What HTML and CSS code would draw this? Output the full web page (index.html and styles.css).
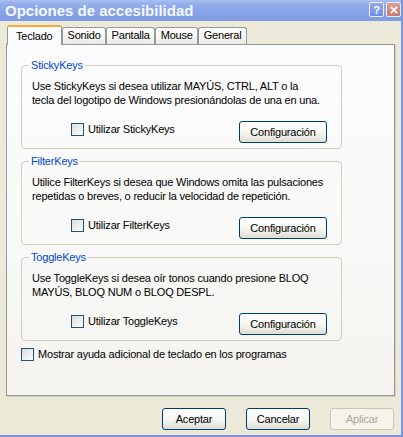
FILE: index.html
```html
<!DOCTYPE html>
<html lang="es">
<head>
<meta charset="utf-8">
<title>Opciones de accesibilidad</title>
<link rel="stylesheet" href="styles.css">
</head>
<body>
<div class="window">
  <div class="titlebar">
    <span class="title">Opciones de accesibilidad</span>
    <div class="tb-buttons">
      <span class="tb-btn help">?</span>
      <span class="tb-btn close"><svg width="14" height="14" viewBox="0 0 14 14"><path d="M4 4 L10 10 M10 4 L4 10" stroke="#fff" stroke-width="2" stroke-linecap="square"/></svg></span>
    </div>
  </div>
  <div class="content">
    <div class="tabs">
      <div class="tab active">Teclado</div>
      <div class="tab">Sonido</div>
      <div class="tab">Pantalla</div>
      <div class="tab">Mouse</div>
      <div class="tab">General</div>
    </div>
    <div class="panel">
      <fieldset class="group">
        <legend>StickyKeys</legend>
        <p class="desc">Use StickyKeys si desea utilizar MAYÚS, CTRL, ALT o la<br>tecla del logotipo de Windows presionándolas de una en una.</p>
        <div class="row">
          <label class="check"><span class="box"></span>Utilizar StickyKeys</label>
          <button class="btn cfg">Configuración</button>
        </div>
      </fieldset>
      <fieldset class="group">
        <legend>FilterKeys</legend>
        <p class="desc">Utilice FilterKeys si desea que Windows omita las pulsaciones<br>repetidas o breves, o reducir la velocidad de repetición.</p>
        <div class="row">
          <label class="check"><span class="box"></span>Utilizar FilterKeys</label>
          <button class="btn cfg">Configuración</button>
        </div>
      </fieldset>
      <fieldset class="group">
        <legend>ToggleKeys</legend>
        <p class="desc">Use ToggleKeys si desea oír tonos cuando presione BLOQ<br>MAYÚS, BLOQ NUM o BLOQ DESPL.</p>
        <div class="row">
          <label class="check"><span class="box"></span>Utilizar ToggleKeys</label>
          <button class="btn cfg">Configuración</button>
        </div>
      </fieldset>
      <label class="check extra"><span class="box"></span>Mostrar ayuda adicional de teclado en los programas</label>
    </div>
    <div class="actions">
      <button class="btn action">Aceptar</button>
      <button class="btn action">Cancelar</button>
      <button class="btn action disabled">Aplicar</button>
    </div>
  </div>
</div>
</body>
</html>
```

FILE: styles.css
```css
html, body {
  margin: 0;
  padding: 0;
}
body {
  font-family: "Liberation Sans", Arial, sans-serif;
  font-size: 11px;
  letter-spacing: -0.2px;
  color: #000;
}
.window {
  width: 403px;
  height: 437px;
  box-sizing: border-box;
  border-right: 2px solid #7C93E0;
  border-bottom: 2px solid #7C93E0;
  background: #ECE9D8;
  display: flex;
  flex-direction: column;
  overflow: hidden;
}
.titlebar {
  height: 21px;
  flex: none;
  display: flex;
  align-items: center;
  padding: 0 0 0 5px;
  background: linear-gradient(#A9C0F0 0%, #93AEEB 20%, #86A3E8 60%, #7F9CE5 100%);
}
.title {
  flex: 1;
  color: #F4F7FE;
  font: bold 15px "Liberation Sans", Arial, sans-serif;
  letter-spacing: 0;
  line-height: 21px;
}
.tb-buttons {
  display: flex;
  gap: 2px;
  margin-top: -2px;
}
.tb-btn {
  width: 15px;
  height: 15px;
  box-sizing: border-box;
  border-radius: 2px;
  border: 1px solid #E8EEFB;
  display: flex;
  align-items: center;
  justify-content: center;
  color: #fff;
  font: bold 11px "Liberation Sans", Arial, sans-serif;
}
.tb-btn.help {
  background: linear-gradient(#8FA9EC, #6E8EE3);
}
.tb-btn.close {
  background: linear-gradient(#DDA095, #C97866);
}
.tb-btn svg {
  width: 12px;
  height: 12px;
}
.content {
  flex: 1;
  display: flex;
  flex-direction: column;
}
.tabs {
  display: flex;
  align-items: flex-end;
  height: 20px;
  margin: 4px 0 -1px 7px;
  position: relative;
  z-index: 1;
}
.tab {
  height: 16px;
  line-height: 15px;
  padding: 0 4px 0 5px;
  margin-bottom: 1px;
  border: 1px solid #919B9C;
  border-bottom: none;
  border-radius: 3px 3px 0 0;
  background: linear-gradient(#FFFFFF, #F3F3EF 70%, #E8E7E0);
}
.tab.active {
  line-height: 19px;
  padding: 0 8px;
  margin-bottom: 0;
  border-top: 2px solid #F2A93A;
  height: 18px;
  background: #FCFCFE;
}
.panel {
  height: 352px;
  box-sizing: border-box;
  margin: 0 6px;
  padding: 13px 0 0 14px;
  border: 1px solid #919B9C;
  background: linear-gradient(#FCFCFE, #F8F8F6 60%, #F4F3EE);
  box-shadow: 1px 1px 0 #D0CEBF;
}
.group {
  width: 321px;
  box-sizing: border-box;
  margin: 0 0 5px 0;
  padding: 7px 14px 5px 10px;
  border: 1px solid #D0D0BF;
  border-radius: 4px;
}
.group legend {
  color: #0046D5;
  line-height: 14px;
  padding: 0 2px;
  margin-left: -3px;
}
.desc {
  margin: 0;
  line-height: 14px;
  white-space: nowrap;
}
.row {
  display: flex;
  align-items: flex-start;
  margin-top: 14px;
}
.check {
  display: flex;
  align-items: center;
  gap: 4px;
  line-height: 13px;
}
.row .check {
  margin: 2px 0 0 39px;
}
.box {
  width: 13px;
  height: 13px;
  box-sizing: border-box;
  border: 1px solid #1C5180;
  background: linear-gradient(135deg, #DCDCD7, #FFFFFF);
  flex: none;
}
.btn {
  font: inherit;
  letter-spacing: inherit;
  color: #000;
  height: 22px;
  padding: 0;
  box-sizing: border-box;
  border: 1px solid #003C74;
  border-radius: 3px;
  background: linear-gradient(#FFFFFF, #F4F4F0 60%, #E3E1D8 90%, #D6D0C5);
  box-shadow: inset 0 -1px 0 #E6E3D6;
}
.btn.cfg {
  width: 88px;
  margin-left: auto;
}
.extra {
  margin-top: 7px;
}
.actions {
  display: flex;
  justify-content: flex-end;
  gap: 20px;
  padding: 12px 7px 0 0;
}
.btn.action {
  width: 64px;
}
.btn.disabled {
  color: #ACA899;
  border-color: #C9C7BA;
  background: #F5F4EA;
  box-shadow: none;
}
```
